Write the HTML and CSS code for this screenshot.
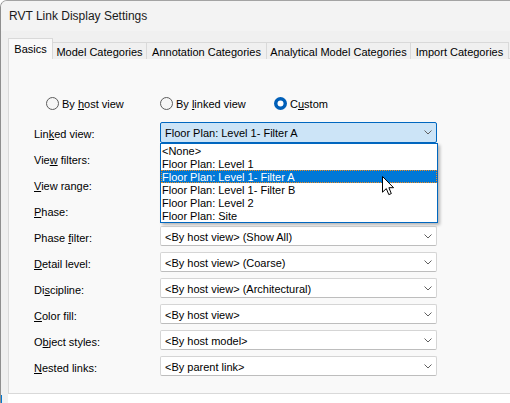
FILE: index.html
```html
<!DOCTYPE html>
<html>
<head>
<meta charset="utf-8">
<link rel="stylesheet" href="styles.css">
</head>
<body>
<div class="window">
  <div class="titlebar">RVT Link Display Settings</div>
  <div class="tabs">
    <div class="tab tab-basics selected">Basics</div>
    <div class="tab tab-model">Model Categories</div>
    <div class="tab tab-annot">Annotation Categories</div>
    <div class="tab tab-analyt">Analytical Model Categories</div>
    <div class="tab tab-import">Import Categories</div>
  </div>
  <div class="panel">
    <div class="modes">
      <div class="radio"><svg width="13" height="13" viewBox="0 0 13 13"><circle cx="6.5" cy="6.5" r="6" fill="#f6f6f6" stroke="#5c5c5c"/></svg><span>By <u>h</u>ost view</span></div>
      <div class="radio"><svg width="13" height="13" viewBox="0 0 13 13"><circle cx="6.5" cy="6.5" r="6" fill="#f6f6f6" stroke="#5c5c5c"/></svg><span>By <u>l</u>inked view</span></div>
      <div class="radio"><svg width="13" height="13" viewBox="0 0 13 13"><circle cx="6.5" cy="6.5" r="6.5" fill="#005fb8"/><circle cx="6.5" cy="6.5" r="3" fill="#fff"/></svg><span>C<u>u</u>stom</span></div>
    </div>
    <div class="form">
      <div class="label">Lin<u>k</u>ed view:</div>
      <div class="select active"><span>Floor Plan: Level 1- Filter A</span><svg class="chev" width="8" height="5" viewBox="0 0 8 5"><path d="M0.5 0.5 L4 4 L7.5 0.5" fill="none" stroke="#606060"/></svg></div>

      <div class="label">Vie<u>w</u> filters:</div>
      <div class="select"><span></span><svg class="chev" width="8" height="5" viewBox="0 0 8 5"><path d="M0.5 0.5 L4 4 L7.5 0.5" fill="none" stroke="#606060"/></svg></div>

      <div class="label"><u>V</u>iew range:</div>
      <div class="select"><span></span><svg class="chev" width="8" height="5" viewBox="0 0 8 5"><path d="M0.5 0.5 L4 4 L7.5 0.5" fill="none" stroke="#606060"/></svg></div>

      <div class="label"><u>P</u>hase:</div>
      <div class="select"><span></span><svg class="chev" width="8" height="5" viewBox="0 0 8 5"><path d="M0.5 0.5 L4 4 L7.5 0.5" fill="none" stroke="#606060"/></svg></div>

      <div class="label">Phase <u>f</u>ilter:</div>
      <div class="select"><span>&lt;By host view&gt; (Show All)</span><svg class="chev" width="8" height="5" viewBox="0 0 8 5"><path d="M0.5 0.5 L4 4 L7.5 0.5" fill="none" stroke="#606060"/></svg></div>

      <div class="label"><u>D</u>etail level:</div>
      <div class="select"><span>&lt;By host view&gt; (Coarse)</span><svg class="chev" width="8" height="5" viewBox="0 0 8 5"><path d="M0.5 0.5 L4 4 L7.5 0.5" fill="none" stroke="#606060"/></svg></div>

      <div class="label">Di<u>s</u>cipline:</div>
      <div class="select"><span>&lt;By host view&gt; (Architectural)</span><svg class="chev" width="8" height="5" viewBox="0 0 8 5"><path d="M0.5 0.5 L4 4 L7.5 0.5" fill="none" stroke="#606060"/></svg></div>

      <div class="label"><u>C</u>olor fill:</div>
      <div class="select"><span>&lt;By host view&gt;</span><svg class="chev" width="8" height="5" viewBox="0 0 8 5"><path d="M0.5 0.5 L4 4 L7.5 0.5" fill="none" stroke="#606060"/></svg></div>

      <div class="label">O<u>b</u>ject styles:</div>
      <div class="select"><span>&lt;By host model&gt;</span><svg class="chev" width="8" height="5" viewBox="0 0 8 5"><path d="M0.5 0.5 L4 4 L7.5 0.5" fill="none" stroke="#606060"/></svg></div>

      <div class="label"><u>N</u>ested links:</div>
      <div class="select"><span>&lt;By parent link&gt;</span><svg class="chev" width="8" height="5" viewBox="0 0 8 5"><path d="M0.5 0.5 L4 4 L7.5 0.5" fill="none" stroke="#606060"/></svg></div>
    </div>

    <div class="list">
      <div class="item">&lt;None&gt;</div>
      <div class="item">Floor Plan: Level 1</div>
      <div class="item current">Floor Plan: Level 1- Filter A</div>
      <div class="item">Floor Plan: Level 1- Filter B</div>
      <div class="item">Floor Plan: Level 2</div>
      <div class="item">Floor Plan: Site</div>
    </div>

    <svg class="cursor" width="13" height="20" viewBox="0 0 13 20"><path d="M0.5 0.5 V16.2 L4.3 12.6 L6.8 18.6 L9.3 17.6 L6.9 11.7 H11.6 Z" fill="#fff" stroke="#000" stroke-width="1" stroke-linejoin="round"/></svg>
  </div>
  <div class="footer"></div>
</div>
</body>
</html>
```
FILE: styles.css
```css
html, body {
  margin: 0;
  padding: 0;
}
body {
  width: 510px;
  height: 403px;
  overflow: hidden;
  background: #ffffff;
  font-family: "Liberation Sans", Arial, sans-serif;
  font-size: 11px;
  color: #000;
}
u {
  text-decoration: underline;
  text-underline-offset: 1px;
}
.window {
  position: relative;
  width: 530px;
  height: 403px;
  box-sizing: border-box;
  background: #f0f0f0;
  border-left: 1px solid #8f8f8f;
  border-top: 1px solid #a3a3a3;
  border-top-left-radius: 7px;
  overflow: hidden;
}
.window::after {
  content: "";
  position: absolute;
  left: -1px;
  bottom: 0;
  width: 2px;
  height: 8px;
  background: #0078d4;
}
.titlebar {
  height: 30px;
  background: #f3f3f3;
  padding-left: 8px;
  display: flex;
  align-items: center;
  font-size: 12px;
  color: #1a1a1a;
}
.tabs {
  display: flex;
  align-items: flex-end;
  height: 21px;
  margin-top: 7px;
  padding-left: 7px;
  position: relative;
  z-index: 2;
}
.tab {
  height: 17px;
  box-sizing: border-box;
  border: 1px solid #d9d9d9;
  border-bottom: none;
  margin-left: -1px;
  background: #f0f0f0;
  display: flex;
  align-items: center;
  justify-content: center;
  white-space: nowrap;
  padding-top: 1px;
}
.tab:first-child {
  margin-left: 0;
}
.tab.selected {
  height: 21px;
  background: #f9f9f9;
  padding-bottom: 2px;
}
.tab-basics { width: 45px; }
.tab-model { width: 95px; }
.tab-annot { width: 121px; }
.tab-analyt { width: 145px; }
.tab-import { width: 99px; }
.panel {
  position: relative;
  margin-left: 7px;
  margin-top: -1px;
  height: 336px;
  box-sizing: border-box;
  border: 1px solid #d9d9d9;
  background: #f9f9f9;
}
.modes {
  display: grid;
  grid-template-columns: 114px 114px 114px;
  padding: 38px 0 0 37px;
}
.radio {
  display: flex;
  align-items: center;
  gap: 3px;
  height: 13px;
  white-space: nowrap;
}
.radio span {
  padding-top: 1px;
}
.radio svg {
  flex: none;
}
.form {
  display: grid;
  grid-template-columns: 126px 277px;
  grid-auto-rows: 20px;
  row-gap: 6px;
  padding-left: 25px;
  margin-top: 12px;
  align-items: center;
}
.label {
  white-space: nowrap;
  padding-top: 3px;
}
.select {
  height: 20px;
  box-sizing: border-box;
  border: 1px solid #d5d5d5;
  border-bottom-color: #bdbdbd;
  border-radius: 2px;
  background: #fff;
  display: flex;
  align-items: center;
  justify-content: space-between;
  padding: 0 4px 0 4px;
  white-space: nowrap;
}
.select span {
  padding-top: 2px;
}
.select.active {
  height: 21px;
  background: #cce4f7;
  border: 1px solid #0067c0;
}
.chev {
  flex: none;
}
.list {
  position: absolute;
  left: 151px;
  top: 84px;
  width: 278px;
  box-sizing: border-box;
  border: 1px solid #0067c0;
  background: #fff;
  box-shadow: 2px 2px 3px rgba(0, 0, 0, 0.28);
  padding: 0;
}
.item {
  height: 13px;
  line-height: 15px;
  overflow: hidden;
  padding-left: 1px;
  white-space: nowrap;
}
.item.current {
  background: #0078d7;
  color: #fff;
  outline: 1px dotted #f08a1c;
  outline-offset: -1px;
}
.cursor {
  position: absolute;
  left: 373px;
  top: 117px;
}
.footer {
  margin-left: 7px;
  height: 12px;
  background: #ffffff;
}
```
